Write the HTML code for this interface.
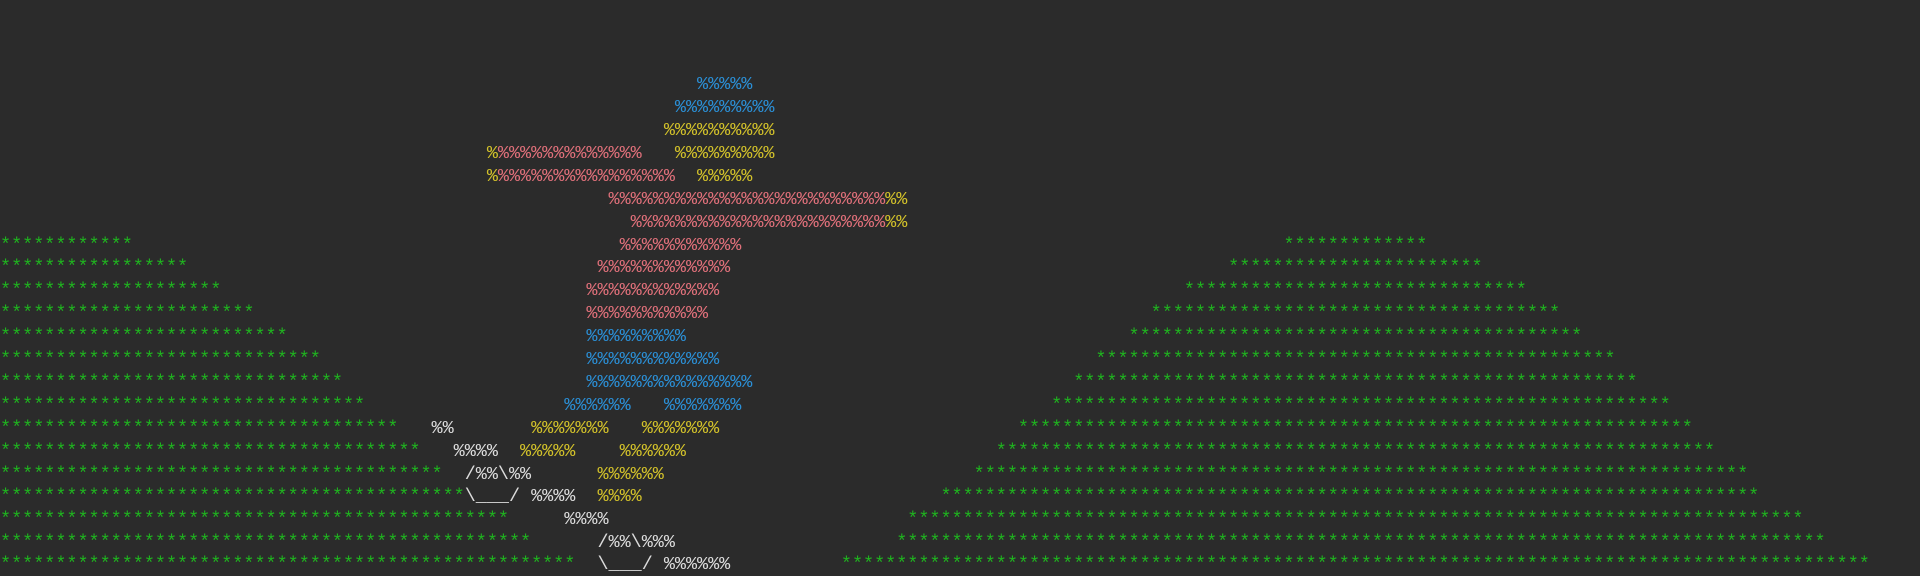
<!DOCTYPE html>
<html><head><meta charset="utf-8"><style>
html,body{margin:0;padding:0;background:#2b2b2b;width:1920px;height:576px;overflow:hidden}
#a{position:relative;top:2px;width:1920px;height:574px;overflow:hidden;font-family:"Liberation Mono",monospace;font-size:18.45px;line-height:22px;white-space:pre}
#a div{position:absolute;height:22px}
.G{color:#1fb31f}.P{color:#e0707a}.B{color:#2b8fd6}.Y{color:#d2c12a}.W{color:#dcdcdc}
</style></head><body><div id="a">
<div style="top:72.2px;left:63ch" class="B">%%%%%</div>
<div style="top:95.1px;left:61ch" class="B">%%%%%%%%%</div>
<div style="top:118.0px;left:60ch" class="Y">%%%%%%%%%%</div>
<div style="top:140.9px;left:44ch"><span class="Y">%</span><span class="P">%%%%%%%%%%%%%</span></div>
<div style="top:140.9px;left:61ch" class="Y">%%%%%%%%%</div>
<div style="top:163.8px;left:44ch"><span class="Y">%</span><span class="P">%%%%%%%%%%%%%%%%</span></div>
<div style="top:163.8px;left:63ch" class="Y">%%%%%</div>
<div style="top:186.7px;left:55ch"><span class="P">%%%%%%%%%%%%%%%%%%%%%%%%%</span><span class="Y">%%</span></div>
<div style="top:209.6px;left:57ch"><span class="P">%%%%%%%%%%%%%%%%%%%%%%%</span><span class="Y">%%</span></div>
<div style="top:232.5px;left:0" class="G">************</div>
<div style="top:232.5px;left:56ch" class="P">%%%%%%%%%%%</div>
<div style="top:232.5px;left:116ch" class="G">*************</div>
<div style="top:255.4px;left:0" class="G">*****************</div>
<div style="top:255.4px;left:54ch" class="P">%%%%%%%%%%%%</div>
<div style="top:255.4px;left:111ch" class="G">***********************</div>
<div style="top:278.3px;left:0" class="G">********************</div>
<div style="top:278.3px;left:53ch" class="P">%%%%%%%%%%%%</div>
<div style="top:278.3px;left:107ch" class="G">*******************************</div>
<div style="top:301.2px;left:0" class="G">***********************</div>
<div style="top:301.2px;left:53ch" class="P">%%%%%%%%%%%</div>
<div style="top:301.2px;left:104ch" class="G">*************************************</div>
<div style="top:324.1px;left:0" class="G">**************************</div>
<div style="top:324.1px;left:53ch" class="B">%%%%%%%%%</div>
<div style="top:324.1px;left:102ch" class="G">*****************************************</div>
<div style="top:347.0px;left:0" class="G">*****************************</div>
<div style="top:347.0px;left:53ch" class="B">%%%%%%%%%%%%</div>
<div style="top:347.0px;left:99ch" class="G">***********************************************</div>
<div style="top:369.9px;left:0" class="G">*******************************</div>
<div style="top:369.9px;left:53ch" class="B">%%%%%%%%%%%%%%%</div>
<div style="top:369.9px;left:97ch" class="G">***************************************************</div>
<div style="top:392.8px;left:0" class="G">*********************************</div>
<div style="top:392.8px;left:51ch" class="B">%%%%%%</div>
<div style="top:392.8px;left:60ch" class="B">%%%%%%%</div>
<div style="top:392.8px;left:95ch" class="G">********************************************************</div>
<div style="top:415.7px;left:0" class="G">************************************</div>
<div style="top:415.7px;left:39ch" class="W">%%</div>
<div style="top:415.7px;left:48ch" class="Y">%%%%%%%</div>
<div style="top:415.7px;left:58ch" class="Y">%%%%%%%</div>
<div style="top:415.7px;left:92ch" class="G">*************************************************************</div>
<div style="top:438.6px;left:0" class="G">**************************************</div>
<div style="top:438.6px;left:41ch" class="W">%%%%</div>
<div style="top:438.6px;left:47ch" class="Y">%%%%%</div>
<div style="top:438.6px;left:56ch" class="Y">%%%%%%</div>
<div style="top:438.6px;left:90ch" class="G">*****************************************************************</div>
<div style="top:461.5px;left:0" class="G">****************************************</div>
<div style="top:461.5px;left:42ch" class="W">/%%\%%</div>
<div style="top:461.5px;left:54ch" class="Y">%%%%%%</div>
<div style="top:461.5px;left:88ch" class="G">**********************************************************************</div>
<div style="top:484.4px;left:0"><span class="G">******************************************</span><span class="W">\___/</span></div>
<div style="top:484.4px;left:48ch" class="W">%%%%</div>
<div style="top:484.4px;left:54ch" class="Y">%%%%</div>
<div style="top:484.4px;left:85ch" class="G">**************************************************************************</div>
<div style="top:507.3px;left:0" class="G">**********************************************</div>
<div style="top:507.3px;left:51ch" class="W">%%%%</div>
<div style="top:507.3px;left:82ch" class="G">*********************************************************************************</div>
<div style="top:530.2px;left:0" class="G">************************************************</div>
<div style="top:530.2px;left:54ch" class="W">/%%\%%%</div>
<div style="top:530.2px;left:81ch" class="G">************************************************************************************</div>
<div style="top:552.1px;left:0" class="G">****************************************************</div>
<div style="top:552.1px;left:54ch" class="W">\___/</div>
<div style="top:552.1px;left:60ch" class="W">%%%%%%</div>
<div style="top:552.1px;left:76ch" class="G">*********************************************************************************************</div>
</div></body></html>
